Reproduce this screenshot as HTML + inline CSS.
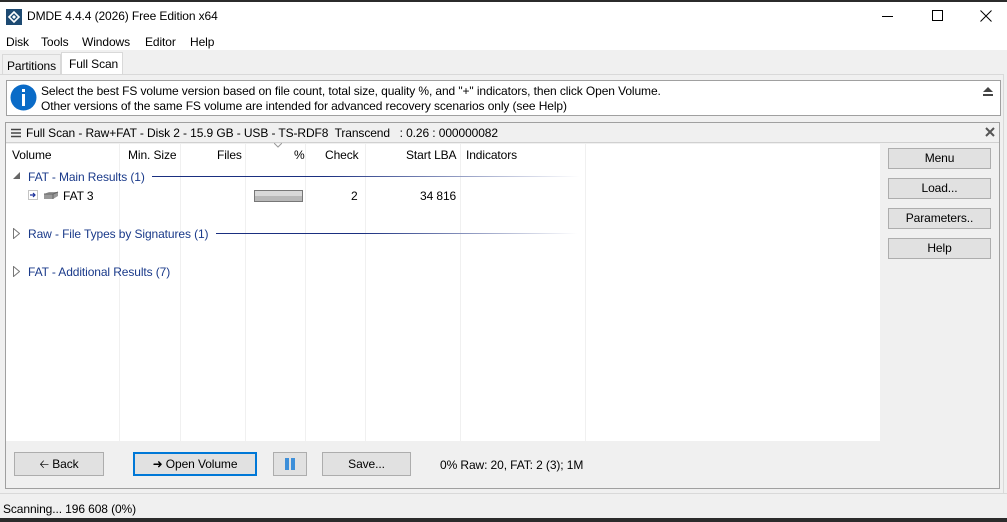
<!DOCTYPE html>
<html><head><style>
*{box-sizing:border-box;margin:0;padding:0}
body{width:1007px;height:522px;background:#f0f0f0;font-family:"Liberation Sans",sans-serif;font-size:12px;letter-spacing:-0.1px;color:#000;position:relative;overflow:hidden}
.a{position:absolute;white-space:nowrap}
.btn{position:absolute;background:#e1e1e1;border:1px solid #adadad;text-align:center;line-height:22px;height:24px}
.rb{position:absolute;left:888px;width:103px;height:21px;background:#e1e1e1;border:1px solid #adadad;text-align:center;line-height:19px}
.col{position:absolute;top:144px;width:1px;height:297px;background:#f0f0f0}
.g{color:#1a3a8a}
</style></head><body>
<div class="a" style="left:0;top:0;width:1007px;height:2px;background:#2b2b2b"></div>
<div class="a" style="left:0;top:2px;width:1007px;height:48px;background:#fff"></div>
<svg class="a" style="left:6px;top:9px" width="16" height="16" viewBox="0 0 16 16"><rect width="16" height="16" fill="#1d4a72"/><path d="M3 8l5-5 5 5-5 5z" fill="none" stroke="#fff" stroke-width="1.6"/><path d="M6 8l2-2 2 2-2 2z" fill="#fff"/></svg>
<div class="a" style="left:27px;top:9px">DMDE 4.4.4 (2026) Free Edition x64</div>
<div class="a" style="left:882px;top:16px;width:11px;height:1px;background:#000"></div>
<div class="a" style="left:932px;top:10px;width:11px;height:11px;border:1px solid #000"></div>
<svg class="a" style="left:980px;top:10px" width="12" height="12"><path d="M0.5 0.5l11 11M11.5 0.5l-11 11" stroke="#000"/></svg>
<div class="a" style="left:6px;top:35px">Disk</div>
<div class="a" style="left:41px;top:35px">Tools</div>
<div class="a" style="left:82px;top:35px">Windows</div>
<div class="a" style="left:145px;top:35px">Editor</div>
<div class="a" style="left:190px;top:35px">Help</div>
<div class="a" style="left:2px;top:54px;width:59px;height:20px;border:1px solid #d9d9d9;border-bottom:none;background:#f0f0f0;padding:4px 0 0 4px">Partitions</div>
<div class="a" style="left:61px;top:52px;width:62px;height:23px;border:1px solid #d9d9d9;border-bottom:none;background:#fff;padding:4px 0 0 7px">Full Scan</div>
<div class="a" style="left:0;top:74px;width:1003px;height:1px;background:#d9d9d9"></div>
<div class="a" style="left:1003px;top:74px;width:1px;height:420px;background:#d9d9d9"></div>
<div class="a" style="left:6px;top:80px;width:995px;height:36px;background:#fff;border:1px solid #a0a0a0"></div>
<svg class="a" style="left:10px;top:84px" width="27" height="27"><circle cx="13.5" cy="13.5" r="13" fill="#0a6bc7"/><rect x="12" y="10" width="3" height="12" fill="#fff"/><rect x="12" y="5" width="3" height="3" fill="#fff"/></svg>
<div class="a" style="left:41px;top:84px">Select the best FS volume version based on file count, total size, quality %, and "+" indicators, then click Open Volume.</div>
<div class="a" style="left:41px;top:99px">Other versions of the same FS volume are intended for advanced recovery scenarios only (see Help)</div>
<svg class="a" style="left:983px;top:87px" width="10" height="9"><path d="M5 0l5 5H0z" fill="#444"/><rect y="7" width="10" height="2" fill="#444"/></svg>
<div class="a" style="left:5px;top:122px;width:995px;height:367px;border:1px solid #a0a0a0"></div>
<div class="a" style="left:6px;top:123px;width:993px;height:20px;border-bottom:1px solid #d0d0d0"></div>
<svg class="a" style="left:11px;top:128px" width="10" height="10"><path d="M0 1.5h10M0 5h10M0 8.5h10" stroke="#444" stroke-width="1.4"/></svg>
<div class="a" style="left:26px;top:126px">Full Scan - Raw+FAT - Disk 2 - 15.9 GB - USB - TS-RDF8&nbsp; Transcend &nbsp;&nbsp;: 0.26 : 000000082</div>
<svg class="a" style="left:985px;top:127px" width="10" height="10"><path d="M1 1l8 8M9 1l-8 8" stroke="#555" stroke-width="2"/></svg>
<div class="a" style="left:6px;top:144px;width:874px;height:297px;background:#fff"></div>
<div class="col" style="left:119px"></div><div class="col" style="left:180px"></div><div class="col" style="left:245px"></div><div class="col" style="left:305px"></div><div class="col" style="left:365px"></div><div class="col" style="left:460px"></div><div class="col" style="left:585px"></div>
<div class="a" style="left:12px;top:148px">Volume</div>
<div class="a" style="left:128px;top:148px">Min. Size</div>
<div class="a" style="left:217px;top:148px">Files</div>
<svg class="a" style="left:274px;top:143px" width="8" height="5"><path d="M0 0l4 4 4-4" fill="none" stroke="#999"/></svg>
<div class="a" style="left:294px;top:148px">%</div>
<div class="a" style="left:325px;top:148px">Check</div>
<div class="a" style="left:406px;top:148px">Start LBA</div>
<div class="a" style="left:466px;top:148px">Indicators</div>
<svg class="a" style="left:13px;top:172px" width="8" height="8"><path d="M7 0v7H0z" fill="#666"/></svg>
<div class="a g" style="left:28px;top:170px">FAT - Main Results (1)</div>
<div class="a" style="left:152px;top:176px;width:428px;height:1px;background:linear-gradient(90deg,#1a2f80,#1a2f80 40%,#fff)"></div>
<svg class="a" style="left:28px;top:190px" width="10" height="10"><rect x="0.5" y="0.5" width="9" height="9" fill="none" stroke="#888" stroke-dasharray="1 1"/><path d="M2 5h5M5 3l2 2-2 2" fill="none" stroke="#1a2f9a" stroke-width="1.2"/></svg>
<svg class="a" style="left:43px;top:191px" width="16" height="9"><path d="M1 3l5-2h9v4l-5 3H1z" fill="#999"/><path d="M1 3h9l5-2M10 3v5" fill="none" stroke="#666"/></svg>
<div class="a" style="left:63px;top:189px">FAT 3</div>
<div class="a" style="left:254px;top:190px;width:49px;height:12px;border:1px solid #777;background:linear-gradient(#d8d8d8 50%,#b8b8b8 50%)"></div>
<div class="a" style="left:351px;top:189px">2</div>
<div class="a" style="left:420px;top:189px">34 816</div>
<svg class="a" style="left:13px;top:228px" width="7" height="11"><path d="M0.5 0.5l6 5-6 5z" fill="none" stroke="#777"/></svg>
<div class="a g" style="left:28px;top:227px">Raw - File Types by Signatures (1)</div>
<div class="a" style="left:216px;top:233px;width:361px;height:1px;background:linear-gradient(90deg,#1a2f80,#1a2f80 40%,#fff)"></div>
<svg class="a" style="left:13px;top:266px" width="7" height="11"><path d="M0.5 0.5l6 5-6 5z" fill="none" stroke="#777"/></svg>
<div class="a g" style="left:28px;top:265px">FAT - Additional Results (7)</div>
<div class="rb" style="top:148px">Menu</div>
<div class="rb" style="top:178px">Load...</div>
<div class="rb" style="top:208px">Parameters..</div>
<div class="rb" style="top:238px">Help</div>
<div class="btn" style="left:14px;top:452px;width:90px">&#129120; Back</div>
<div class="btn" style="left:133px;top:452px;width:124px;border:2px solid #0078d7;line-height:20px">&#10140; Open Volume</div>
<div class="btn" style="left:273px;top:452px;width:34px"><svg width="12" height="12" style="margin-top:5px"><rect x="1" y="0" width="4" height="12" fill="#3d8fd9"/><rect x="7" y="0" width="4" height="12" fill="#3d8fd9"/></svg></div>
<div class="btn" style="left:322px;top:452px;width:89px">Save...</div>
<div class="a" style="left:440px;top:458px">0% Raw: 20, FAT: 2 (3); 1M</div>
<div class="a" style="left:0;top:493px;width:1007px;height:1px;background:#d9d9d9"></div>
<div class="a" style="left:3px;top:502px">Scanning... 196 608 (0%)</div>
<div class="a" style="left:0;top:518px;width:1007px;height:4px;background:#2b2b2b"></div>
</body></html>
